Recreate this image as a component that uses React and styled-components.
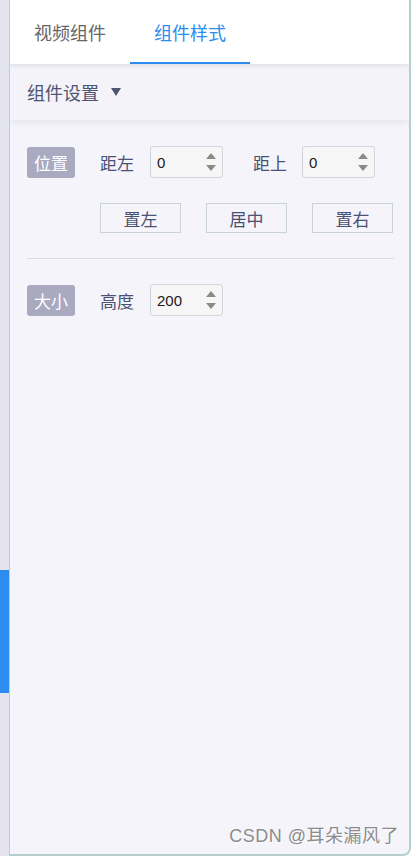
import React from 'react';
import styled, { createGlobalStyle } from 'styled-components';

const GlobalStyle = createGlobalStyle`
  html, body {
    margin: 0;
    padding: 0;
    background: #ffffff;
  }

  body {
    font-family: 'Noto Sans CJK SC', 'Noto Sans', sans-serif;
  }
`;

const StyledShell = styled.div`
  display: flex;
  width: 411px;
  height: 856px;
  overflow: hidden;
`;

const StyledRail = styled.div`
  flex: 0 0 9px;
  display: flex;
  flex-direction: column;
  background-color: #e4e4ee;
  border-right: 1px solid #c8c8d8;

  .thumb {
    margin-top: 570px;
    height: 123px;
    background-color: #2d8cf0;
  }
`;

const StyledPanel = styled.div`
  position: relative;
  flex: 1;
  display: flex;
  flex-direction: column;
  background-color: #f4f4fa;
  border-right: 2px solid #b6cfd0;
  border-bottom: 2px solid #b6cfd0;
  border-bottom-right-radius: 8px;
  overflow: hidden;
`;

const StyledTabs = styled.div`
  position: relative;
  z-index: 2;
  display: flex;
  height: 64px;
  background-color: #ffffff;
  box-shadow: 0 2px 4px rgba(60, 60, 90, 0.1);
`;

const StyledTab = styled.div`
  width: 120px;
  display: flex;
  align-items: center;
  justify-content: center;
  font-size: 18px;
  color: ${({ active }) => (active ? '#2d8cf0' : '#666666')};
  border-bottom: 2px solid ${({ active }) => (active ? '#2d8cf0' : 'transparent')};
  box-sizing: border-box;
  padding-top: 2px;
`;

const StyledSectionBar = styled.div`
  position: relative;
  z-index: 1;
  display: flex;
  align-items: center;
  gap: 12px;
  height: 56px;
  padding-left: 17px;
  font-size: 18px;
  color: #4f5570;
  background-color: #f3f3f9;
  box-shadow: 0 3px 6px rgba(60, 60, 90, 0.07);

  .caret {
    width: 0;
    height: 0;
    border-left: 5px solid transparent;
    border-right: 5px solid transparent;
    border-top: 8px solid #4f5570;
    margin-top: -1px;
  }
`;

const StyledBody = styled.div`
  display: flex;
  flex-direction: column;
  padding: 26px 15px 0 17px;
`;

const StyledRow = styled.div`
  display: flex;
  align-items: center;
  padding-left: ${({ indent }) => (indent ? '73px' : '0')};
  margin-top: ${({ gap }) => gap || 0}px;
`;

const StyledBadge = styled.div`
  width: 48px;
  height: 31px;
  display: flex;
  align-items: center;
  justify-content: center;
  border-radius: 3px;
  background-color: #a9a9bf;
  color: #ffffff;
  font-size: 17px;
  margin-right: 25px;
`;

const StyledLabel = styled.span`
  width: 35px;
  font-size: 17px;
  color: #4a5173;
  margin-right: ${({ after }) => after || 15}px;
  margin-left: ${({ before }) => before || 0}px;
  white-space: nowrap;
`;

const StyledNumber = styled.div`
  position: relative;
  width: 73px;
  height: 32px;
  box-sizing: border-box;
  display: flex;
  align-items: center;
  padding-left: 6px;
  border: 1px solid #cfd6dd;
  border-radius: 3px;
  background-color: #f6f6f7;
  font-family: 'Liberation Sans', Arial, sans-serif;
  font-size: 15px;
  color: #1a1a1a;

  .spin {
    position: absolute;
    right: 6px;
    top: 0;
    bottom: 0;
    display: flex;
    flex-direction: column;
    justify-content: center;
    gap: 6px;
  }
`;

const StyledButton = styled.div`
  width: 81px;
  height: 30px;
  box-sizing: border-box;
  display: flex;
  align-items: center;
  justify-content: center;
  border: 1px solid #c9d3dc;
  font-size: 17px;
  color: #4a5173;
  margin-right: ${({ after }) => after || 0}px;
`;

const StyledDivider = styled.div`
  height: 1px;
  background-color: #d8dae8;
  margin-top: 25px;
`;

const StyledMark = styled.div`
  position: absolute;
  right: 10px;
  bottom: 7px;
  font-family: 'Liberation Sans', 'Noto Sans CJK SC', sans-serif;
  font-size: 18px;
  color: #8c8c8c;
  text-shadow: 1px 1px 0 rgba(255, 255, 255, 0.8);
  letter-spacing: 0.5px;
`;

const Spinner = () => (
  <div className="spin">
    <svg width="10" height="6" viewBox="0 0 10 6">
      <path d="M5 0 L10 6 L0 6 Z" fill="#8a8a8a" />
    </svg>
    <svg width="10" height="6" viewBox="0 0 10 6">
      <path d="M0 0 L10 0 L5 6 Z" fill="#8a8a8a" />
    </svg>
  </div>
);

const NumberField = ({ value }) => (
  <StyledNumber>
    <span>{value}</span>
    <Spinner />
  </StyledNumber>
);

const App = () => {
  const aligns = ['置左', '居中', '置右'];

  return (
    <>
      <GlobalStyle />
      <StyledShell>
        <StyledRail>
          <div className="thumb" />
        </StyledRail>

        <StyledPanel>
          <StyledTabs>
            <StyledTab>视频组件</StyledTab>
            <StyledTab active>组件样式</StyledTab>
          </StyledTabs>

          <StyledSectionBar>
            <span>组件设置</span>
            <span className="caret" />
          </StyledSectionBar>

          <StyledBody>
            <StyledRow>
              <StyledBadge>位置</StyledBadge>
              <StyledLabel>距左</StyledLabel>
              <NumberField value="0" />
              <StyledLabel before={30} after={14}>距上</StyledLabel>
              <NumberField value="0" />
            </StyledRow>

            <StyledRow indent gap={25}>
              {aligns.map((a, i) => (
                <StyledButton key={a} after={i < aligns.length - 1 ? 25 : 0}>
                  {a}
                </StyledButton>
              ))}
            </StyledRow>

            <StyledDivider />

            <StyledRow gap={25}>
              <StyledBadge>大小</StyledBadge>
              <StyledLabel>高度</StyledLabel>
              <NumberField value="200" />
            </StyledRow>
          </StyledBody>

          <StyledMark>CSDN @耳朵漏风了</StyledMark>
        </StyledPanel>
      </StyledShell>
    </>
  );
};

export default App;
